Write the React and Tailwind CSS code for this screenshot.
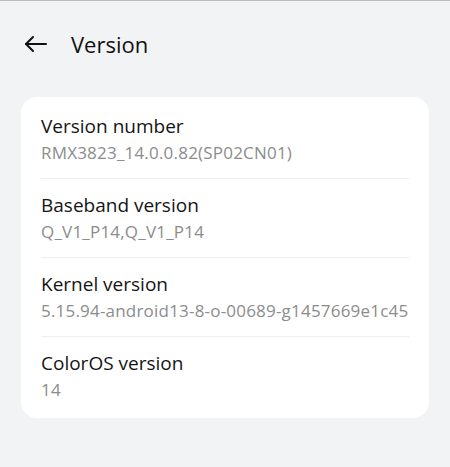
const ITEMS = [
  { title: 'Version number', value: 'RMX3823_14.0.0.82(SP02CN01)' },
  { title: 'Baseband version', value: 'Q_V1_P14,Q_V1_P14' },
  { title: 'Kernel version', value: '5.15.94-android13-8-o-00689-g1457669e1c45' },
  { title: 'ColorOS version', value: '14' },
];

export default function App() {
  return (
    <div className="w-[450px] h-[467px] bg-[#f2f3f5] border-t border-[#bdbdbd] font-['Open_Sans',sans-serif] overflow-hidden">
      <div className="flex items-center h-[88px] pl-[24px] pb-[2px]">
        <svg width="24" height="20" viewBox="0 0 24 20" fill="none" stroke="#111" strokeWidth="2" strokeLinecap="round" strokeLinejoin="round">
          <path d="M2 10H22" />
          <path d="M9 3L2 10L9 17" />
        </svg>
        <span className="ml-[23px] text-[22px] text-[#111] leading-none">Version</span>
      </div>
      <div className="mx-[21px] mt-[8px] bg-white rounded-[16px] px-[20px] pt-[3px] pb-[3px]">
        {ITEMS.map((it, i) => (
          <div key={it.title} className={`pt-[14px] pb-[14px] ${i < ITEMS.length - 1 ? 'border-b border-[#eeeeee]' : ''}`}>
            <div className="text-[19px] text-[#151515] leading-[24px]">{it.title}</div>
            <div className="text-[17px] tracking-[0.2px] text-[#8c8c8c] leading-[22px] mt-[4px] whitespace-nowrap">{it.value}</div>
          </div>
        ))}
      </div>
    </div>
  );
}
